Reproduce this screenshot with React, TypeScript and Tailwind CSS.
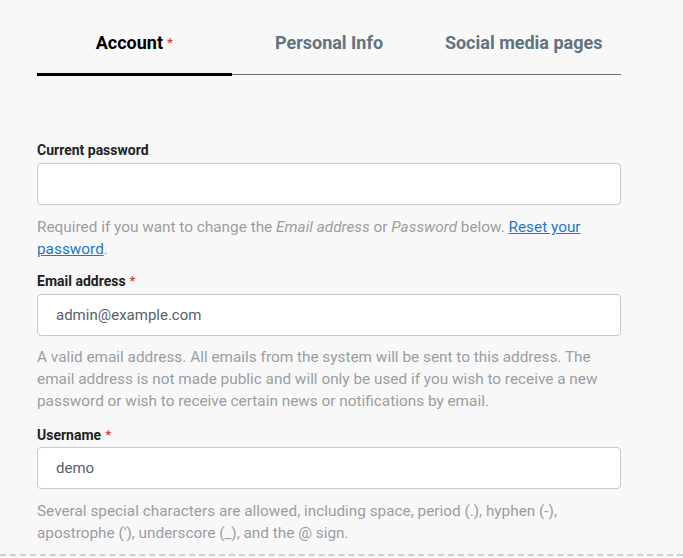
const tabs = [
  { label: "Account", active: true, required: true },
  { label: "Personal Info", active: false },
  { label: "Social media pages", active: false },
];

const Req = () => <span className="ml-1 text-[#d9433a] text-[13px] align-top">*</span>;

const App = () => {
  return (
    <div className="min-h-[558px] bg-[#f8f8f8] font-['Roboto',sans-serif]">
      <div className="w-[584px] ml-[37px] pt-[31px]">
        <div className="flex items-start">
          {tabs.map((t) => (
            <div
              key={t.label}
              className={
                t.active
                  ? "flex-1 text-center text-[18px] leading-6 font-bold text-black pb-[18px] border-b-[3px] border-black"
                  : "flex-1 text-center text-[18px] leading-6 font-bold text-[#627380] pb-[19px] border-b border-[#6b6b6b]"
              }
            >
              {t.label}
              {t.required && <Req />}
            </div>
          ))}
        </div>

        <form className="mt-[64px] text-left">
          <label className="block text-[14px] leading-5 font-bold text-[#222]">Current password</label>
          <input
            type="password"
            className="mt-[3px] block w-full h-[42px] rounded-[4px] border border-[#c9c9c9] bg-white px-[18px]"
          />
          <p className="mt-[11px] text-[15.35px] leading-[22px] text-[#9a9ea2]">
            Required if you want to change the <em>Email address</em> or <em>Password</em> below.{" "}
            <a href="#" className="text-[#1f78c8] underline">Reset your password</a>.
          </p>

          <label className="mt-[11px] block text-[14px] leading-5 font-bold text-[#222]">
            Email address<Req />
          </label>
          <input
            type="email"
            defaultValue="admin@example.com"
            className="mt-[3px] block w-full h-[42px] rounded-[4px] border border-[#c9c9c9] bg-white px-[18px] text-[15px] text-[#56616b]"
          />
          <p className="mt-[10px] text-[15.35px] leading-[22px] text-[#9a9ea2]">
            A valid email address. All emails from the system will be sent to this address. The email address is
            not made public and will only be used if you wish to receive a new password or wish to receive certain
            news or notifications by email.
          </p>

          <label className="mt-[13px] block text-[14px] leading-5 font-bold text-[#222]">
            Username<Req />
          </label>
          <input
            type="text"
            defaultValue="demo"
            className="mt-[2px] block w-full h-[42px] rounded-[4px] border border-[#c9c9c9] bg-white px-[18px] text-[15px] text-[#56616b]"
          />
          <p className="mt-[11px] text-[15.35px] leading-[22px] text-[#9a9ea2]">
            Several special characters are allowed, including space, period (.), hyphen (-), apostrophe ('),
            underscore (_), and the @ sign.
          </p>
        </form>
      </div>
      <div className="mt-[10px] border-t-2 border-dashed border-[#cfcfcf]" />
    </div>
  );
};

export default App;
